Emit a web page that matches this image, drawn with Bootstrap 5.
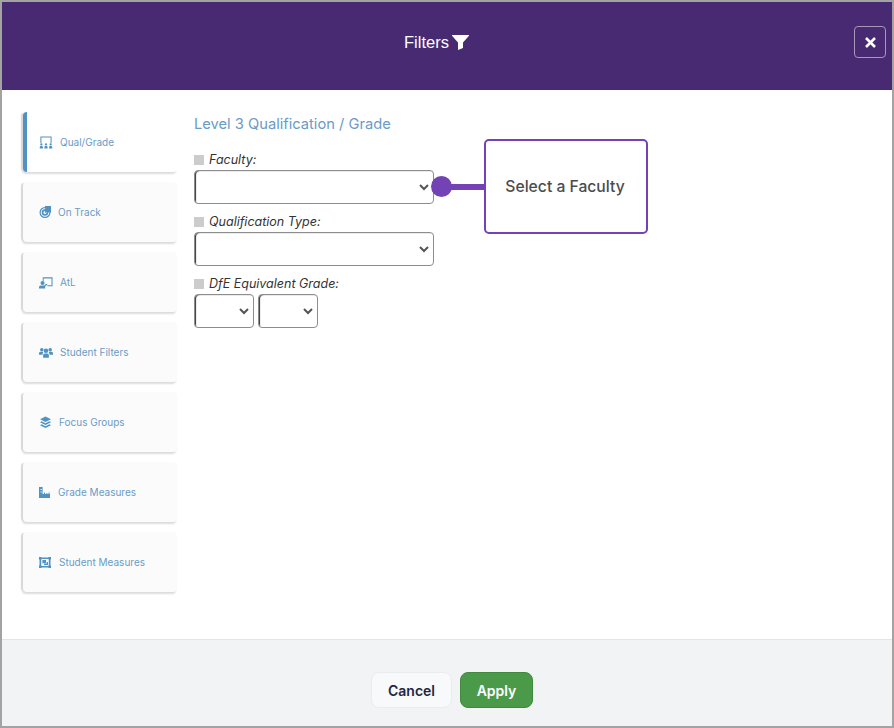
<!DOCTYPE html>
<html lang="en">
<head>
<meta charset="utf-8">
<title>Filters</title>
<link href="https://cdn.jsdelivr.net/npm/bootstrap@5.3.0/dist/css/bootstrap.min.css" rel="stylesheet">
<style>
html,body{height:728px;overflow:hidden;background:#fff}
body{font-family:Inter,"Liberation Sans",sans-serif;color:#212529}
.frame{height:728px;border:2px solid #a3a3a3}
.head{height:88px;background:#472a72;color:#fff;font-family:"Liberation Sans",sans-serif;font-size:16.5px;padding:0 21px 8px 0;gap:3px}
.head-close{width:32px;height:32px;right:6px;top:24px;border:1px solid #a898bc;border-radius:4px;background:transparent;padding:0}
.main{padding:22px 0 0 21px;gap:17px}
.tabs{width:154px;gap:10px}
.tab{height:60px;background:#fbfbfb;border-radius:4px;padding:1px 0 0 16px;gap:7px;color:#6a9bc6;font-size:10px;box-shadow:-3px 0 1px -1px #d8d8d8,-1px 2px 2px #dcdcdc}
.tab.on{background:#fff;border-left:4px solid #5092c1;padding-left:12px}
.tab svg{height:13px;fill:#5092c1;flex:none}
.w14{width:14px}
.w13{width:13px}
.w12{width:12px}
.tab-title{color:#6a9bc6;font-size:14.7px;line-height:20px;margin:2px 0 18px;font-weight:400}
.sq{width:10px;height:10px;background:#ccc;flex:none}
.lbl{font-size:12.5px;font-style:italic;line-height:16px;height:16px;gap:5px;margin-bottom:2px;color:#333}
.sel{height:34px;width:240px;padding:0 4px;border:1px solid #8d8d8d;border-radius:4px;box-shadow:inset 2px 1px 1px -1px #333;background-image:url("data:image/svg+xml,%3csvg xmlns='http://www.w3.org/2000/svg' viewBox='0 0 10 7'%3e%3cpath fill='none' stroke='%23555' stroke-width='2' d='M1 1L5 5L9 1'/%3e%3c/svg%3e");background-position:right 4px center;background-size:10px 7px;margin-bottom:10px}
.sel-s{width:60px}
.callout{left:484px;top:139px;width:164px;height:95px;border:2px solid #7342b5;border-radius:5px;background:#fff;color:#4c4c4c;font-size:15.7px;font-weight:500;z-index:2;padding-right:2px}
.dot{left:431px;top:176px;width:21px;height:21px;background:#7342b5;border-radius:50%;z-index:2}
.link{left:450px;top:184px;width:35px;height:6px;background:#7342b5;z-index:2}
.foot{height:87px;background:#f2f3f5;border-top:1px solid #e4e5e8;gap:8px;padding:14px 0 0 10px}
.act{height:36px;font-size:14px;font-weight:600;border-radius:8px;padding:0}
.act-c{width:81px;background:#f8f9fb;border:1px solid #ebecef;color:#1d2740}
.act-a{width:73px;background:#4b9a4a;border:1px solid #3f8a3f;color:#fff}
</style>
</head>
<body>
<div class="frame d-flex flex-column position-relative">
  <header class="head position-relative d-flex align-items-center justify-content-center">
    <span>Filters</span>
    <svg width="17" height="15" viewBox="0 0 17 15"><path fill="#fff" d="M0 0H17V.8L11 7.6V13L6 15V7.6L0 .8Z"/></svg>
    <button class="head-close position-absolute d-flex align-items-center justify-content-center" aria-label="Close">
      <svg width="11" height="11" viewBox="0 0 11 11"><path stroke="#fff" stroke-width="2.6" d="M1 1L10 10M10 1L1 10"/></svg>
    </button>
  </header>
  <main class="main flex-grow-1 d-flex">
    <nav class="tabs d-flex flex-column">
      <div class="tab on d-flex align-items-center">
        <svg class="w14" viewBox="0 0 15 13"><path d="M1.5 0H13.5V7H12.4V1.1H2.6V7H1.5Z"/><circle cx="2.5" cy="8.6" r="1.2"/><circle cx="7.5" cy="8.6" r="1.2"/><circle cx="12.5" cy="8.6" r="1.2"/><path d="M0.8 13V11.2Q0.8 10.3 2 10.3H3Q4.2 10.3 4.2 11.2V13ZM5.8 13V11.2Q5.8 10.3 7 10.3H8Q9.2 10.3 9.2 11.2V13ZM10.8 13V11.2Q10.8 10.3 12 10.3H13Q14.2 10.3 14.2 11.2V13Z"/></svg>
        <span>Qual/Grade</span>
      </div>
      <div class="tab d-flex align-items-center">
        <svg class="w12" viewBox="0 0 12 13"><path fill-rule="evenodd" d="M6 1A5.5 5.5 0 1 0 11.5 6.5A5.5 5.5 0 1 0 6 1ZM6 2.2A4.3 4.3 0 1 1 1.7 6.5A4.3 4.3 0 0 1 6 2.2Z"/><path fill-rule="evenodd" d="M6 3.2A3.3 3.3 0 1 0 9.3 6.5A3.3 3.3 0 1 0 6 3.2ZM6 4.9A1.6 1.6 0 1 1 4.4 6.5A1.6 1.6 0 0 1 6 4.9Z"/><path d="M5.6 6.1L9 2.6L9.4 1.4L10.6 1V2L11.6 2.2L10 3.6L6.4 6.9Z"/></svg>
        <span>On Track</span>
      </div>
      <div class="tab d-flex align-items-center">
        <svg class="w14" viewBox="0 0 15 13"><path d="M4 1H14.5V10.5H9V9.4H13.4V2.1H5V5H4Z"/><circle cx="3.8" cy="7" r="2.2"/><path d="M0 13V11.4Q0 9.6 2 9.6H5.6L7.4 8H9.4L6.6 10.8V13Z"/></svg>
        <span>AtL</span>
      </div>
      <div class="tab d-flex align-items-center">
        <svg class="w14" viewBox="0 0 15 13"><circle cx="3" cy="3.5" r="1.9"/><circle cx="12" cy="3.5" r="1.9"/><circle cx="7.5" cy="4.6" r="2.4"/><path d="M0 9V7.4Q0 5.8 2 5.8H3.6Q4.2 5.8 4.6 6.2Q3.8 7.2 3.8 9ZM15 9V7.4Q15 5.8 13 5.8H11.4Q10.8 5.8 10.4 6.2Q11.2 7.2 11.2 9ZM4.4 12V9.6Q4.4 7.6 6.4 7.6H8.6Q10.6 7.6 10.6 9.6V12Z"/></svg>
        <span>Student Filters</span>
      </div>
      <div class="tab d-flex align-items-center">
        <svg class="w13" viewBox="0 0 13 13"><path d="M6.5 .5L12 3.2L6.5 6L1 3.2Z"/><path d="M2.6 5.2L6.5 7.2L10.4 5.2L12 6.2L6.5 9L1 6.2Z"/><path d="M2.6 8.2L6.5 10.2L10.4 8.2L12 9.2L6.5 12L1 9.2Z"/></svg>
        <span>Focus Groups</span>
      </div>
      <div class="tab d-flex align-items-center">
        <svg class="w12" viewBox="0 0 12 13"><path fill-rule="evenodd" d="M0 1H3.6V8H5V6.6H6V8H7.4V7H8.4V8H9.6V6.6H10.6V8H11V12H0ZM1.5 3V4H2.8V3ZM1.5 5.4V6.4H2.8V5.4Z"/></svg>
        <span>Grade Measures</span>
      </div>
      <div class="tab d-flex align-items-center">
        <svg class="w13" viewBox="0 0 13 13"><path fill-rule="evenodd" d="M.5 1.5H11.5V11.5H.5ZM2.2 3V10H9.8V3Z"/><path d="M0 1H2.5V3.4H0ZM9.5 1H12V3.4H9.5ZM0 9.6H2.5V12H0ZM9.5 9.6H12V12H9.5Z"/><path d="M3.4 4H7V7.2H3.4ZM7.6 6H9V9H5V7.8H7.6Z"/></svg>
        <span>Student Measures</span>
      </div>
    </nav>
    <section>
      <h2 class="tab-title">Level 3 Qualification / Grade</h2>
      <div class="lbl d-flex align-items-center"><i class="sq"></i><span>Faculty:</span></div>
      <select class="form-select sel" aria-label="Faculty"><option></option></select>
      <div class="lbl d-flex align-items-center"><i class="sq"></i><span>Qualification Type:</span></div>
      <select class="form-select sel" aria-label="Qualification Type"><option></option></select>
      <div class="lbl d-flex align-items-center"><i class="sq"></i><span>DfE Equivalent Grade:</span></div>
      <div class="d-flex gap-1">
        <select class="form-select sel sel-s" aria-label="Grade from"><option></option></select>
        <select class="form-select sel sel-s" aria-label="Grade to"><option></option></select>
      </div>
    </section>
  </main>
  <footer class="foot d-flex align-items-center justify-content-center">
    <button class="btn act act-c">Cancel</button>
    <button class="btn act act-a">Apply</button>
  </footer>
</div>
<div class="dot position-absolute"></div>
<div class="link position-absolute"></div>
<div class="callout position-absolute d-flex align-items-center justify-content-center">Select a Faculty</div>
<script src="https://cdn.jsdelivr.net/npm/bootstrap@5.3.0/dist/js/bootstrap.bundle.min.js"></script>
</body>
</html>
